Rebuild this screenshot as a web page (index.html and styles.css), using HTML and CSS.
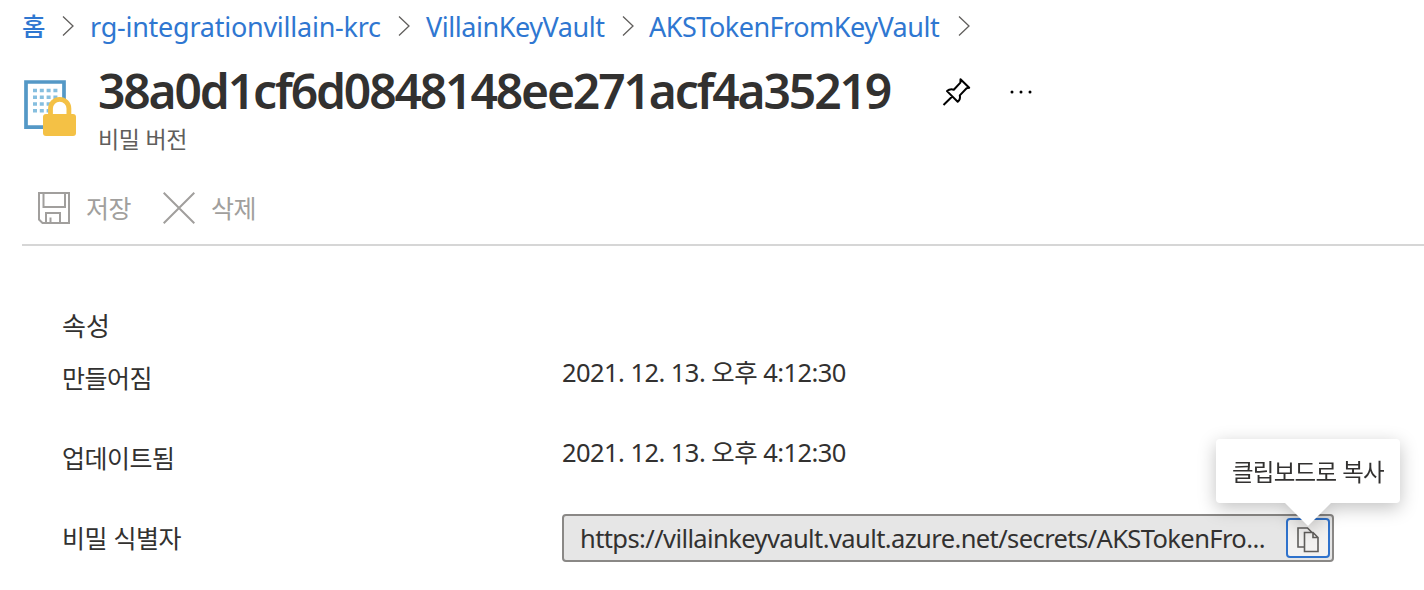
FILE: index.html
```html
<!DOCTYPE html>
<html lang="ko">
<head>
<meta charset="utf-8">
<title>38a0d1cf6d0848148ee271acf4a35219</title>
<link rel="stylesheet" href="styles.css">
</head>
<body>
<nav class="crumbs">
  <a class="crumb crumb-home">홈</a>
  <svg class="chevron" viewBox="0 0 12 20"><path d="M1 .5 11 10 1 19.500"/></svg>
  <a class="crumb crumb-group">rg-integrationvillain-krc</a>
  <svg class="chevron" viewBox="0 0 12 20"><path d="M1 .5 11 10 1 19.500"/></svg>
  <a class="crumb crumb-vault">VillainKeyVault</a>
  <svg class="chevron" viewBox="0 0 12 20"><path d="M1 .5 11 10 1 19.500"/></svg>
  <a class="crumb crumb-secret">AKSTokenFromKeyVault</a>
  <svg class="chevron" viewBox="0 0 12 20"><path d="M1 .5 11 10 1 19.500"/></svg>
</nav>
<header class="header">
  <svg class="resource-icon" viewBox="0 0 52 56">
    <path d="M2 2H40V47.200H2z" fill="#fff" stroke="#5498c6" stroke-width="3.700"/>
    <g fill="none" stroke="#86bfdf" stroke-width="3.600" stroke-dasharray="4 2.800">
      <path d="M9 10.500H33.500M9 17.300H33.500M9 24H33.500M9 30.700H33.500"/>
    </g>
    <path d="M26.500 36V28.500a9.200 9.200 0 0 1 18.400 0V36" fill="#fff" stroke="#f4c145" stroke-width="4.800"/>
    <rect x="19" y="34" width="33" height="22" rx="3" fill="#f4c145"/>
  </svg>
  <div class="titles">
    <div class="title-row">
      <h1 class="title">38a0d1cf6d0848148ee271acf4a35219</h1>
      <svg class="pin" viewBox="0 0 30 30"><path d="M18.500 2.200 27.200 10.800 24.600 11.300 17.800 18.400Q18.800 22 15.700 24.800L5 14.100Q8 11.500 11.800 12.700L18.400 5.600zM10.200 19.500 1.500 28"/></svg>
      <svg class="more" viewBox="0 0 24 4"><circle cx="2" cy="2" r="1.500"/><circle cx="11" cy="2" r="1.500"/><circle cx="20" cy="2" r="1.500"/></svg>
    </div>
    <div class="subtitle">비밀 버전</div>
  </div>
</header>
<div class="toolbar">
  <div class="command">
    <svg class="command-icon" viewBox="0 0 32 32"><path d="M1 1H31V31H4.500L1 27.500zM5.500 1V15H27V1M8 31V21H22V31M12.500 31V25.500"/></svg>
    <span class="command-label">저장</span>
  </div>
  <div class="command">
    <svg class="command-icon" viewBox="0 0 32 32"><path d="M.7.7 31.300 31.300M31.300.7.7 31.300"/></svg>
    <span class="command-label">삭제</span>
  </div>
</div>
<main class="properties">
  <h2 class="section">속성</h2>
  <div class="row"><span class="label">만들어짐</span><span class="value">2021. 12. 13. <span class="ko">오후</span> 4:12:30</span></div>
  <div class="row"><span class="label">업데이트됨</span><span class="value">2021. 12. 13. <span class="ko">오후</span> 4:12:30</span></div>
  <div class="row">
    <span class="label">비밀 식별자</span>
    <div class="field">
      <span class="url">https://villainkeyvault.vault.azure.net/secrets/AKSTokenFro...</span>
      <div class="copy">
        <svg class="copy-icon" viewBox="0 0 22 26"><path d="M7.500 20H1V1H10.500L15 5.500M7.500 5.500H16L21 10.500V24.500H7.500zM16 5.500V10.500H21"/></svg>
        <div class="tooltip">클립보드로 복사</div>
      </div>
    </div>
  </div>
</main>
</body>
</html>
```
FILE: styles.css
```css
* { box-sizing: border-box; }
body {
  margin: 0;
  width: 1424px;
  height: 590px;
  overflow: hidden;
  background: #fff;
  color: #323130;
  font-family: "Noto Sans", "Noto Sans CJK KR", sans-serif;
  font-size: 25.5px;
}
h1, h2 { margin: 0; }
svg { display: block; flex: none; fill: none; }
.crumbs {
  display: flex;
  align-items: center;
  height: 52px;
  padding-left: 22px;
  color: #2f77d1;
  white-space: nowrap;
}
.crumb { flex: none; font-size: 27px; }
.crumb-home { width: 40px; padding-bottom: 4px; font: 500 25.5px "Noto Sans CJK KR", sans-serif; }
.crumb-group { width: 308px; margin-left: 16px; letter-spacing: -.25px; }
.crumb-vault { width: 180px; margin-left: 16px; margin-right: 16px; letter-spacing: -.45px; }
.crumb-secret { width: 292px; margin-left: 15px; margin-right: 17px; letter-spacing: -.5px; }
.chevron { width: 12px; height: 20px; stroke: #605e5c; stroke-width: 1.3; }
.header { display: flex; padding-left: 24px; height: 112px; }
.resource-icon { width: 52px; height: 56px; margin-top: 28px; }
.titles { margin-left: 22px; }
.title-row { display: flex; align-items: center; height: 73px; padding-top: 6px; }
.title { width: 844px; margin-top: -1px; font-size: 48px; font-weight: 600; line-height: 60px; letter-spacing: -2.15px; white-space: nowrap; }
.pin { width: 30px; height: 30px; stroke: #000; stroke-width: 2; stroke-linejoin: round; }
.more { width: 24px; height: 4px; margin-left: 38px; fill: #000; }
.subtitle { color: #605e5c; font: 23px/26px "Noto Sans CJK KR", sans-serif; letter-spacing: -.4px; }
.toolbar {
  display: flex;
  gap: 32px;
  height: 82px;
  margin-left: 22px;
  padding: 28px 0 0 16px;
  border-bottom: 2px solid #d6d6d6;
}
.command { display: flex; height: 32px; align-items: center; gap: 16px; color: #a19f9d; }
.command-icon { width: 32px; height: 32px; stroke: #a19f9d; stroke-width: 2; }
.command-label { width: 45px; padding-bottom: 2px; font: 25px "Noto Sans CJK KR", sans-serif; letter-spacing: -.5px; white-space: nowrap; }
.properties { padding: 60px 0 0 62px; }
.section { height: 52px; font: 26px/38px "Noto Sans CJK KR", sans-serif; letter-spacing: 0; }
.row { display: flex; height: 80px; }
.label { width: 500px; font: 25px/38px "Noto Sans CJK KR", sans-serif; letter-spacing: -.5px; }
.value { margin-top: -6px; line-height: 38px; letter-spacing: -.56px; white-space: nowrap; }
.ko { font-family: "Noto Sans CJK KR", sans-serif; }
.field {
  display: flex;
  align-items: center;
  width: 772px;
  height: 48px;
  margin-top: -4px;
  padding-left: 16px;
  border: 2px solid #8a8886;
  border-radius: 4px;
  background: #e6e6e6;
}
.url { width: 706px; padding-bottom: 1px; letter-spacing: -.6px; white-space: nowrap; }
.copy {
  position: relative;
  display: flex;
  justify-content: center;
  width: 44px;
  height: 40px;
  padding-top: 7px;
  border: 2px solid #2f72cc;
  border-radius: 4px;
  background: #f3f2f1;
}
.copy-icon { width: 22px; height: 26px; stroke: #605e5c; stroke-width: 1.6; }
.tooltip {
  position: absolute;
  right: -72px;
  bottom: 53px;
  width: 184px;
  height: 64px;
  padding-left: 16px;
  border-radius: 4px;
  background: #fff;
  font: 23.500px/64px "Noto Sans CJK KR", sans-serif;
  letter-spacing: -.75px;
  white-space: nowrap;
  filter: drop-shadow(0 5px 9px rgba(0, 0, 0, .24));
}
.tooltip::after {
  content: "";
  position: absolute;
  left: 69px;
  top: 64px;
  border: 23px solid transparent;
  border-top-color: #fff;
  border-bottom: 0;
}
```
